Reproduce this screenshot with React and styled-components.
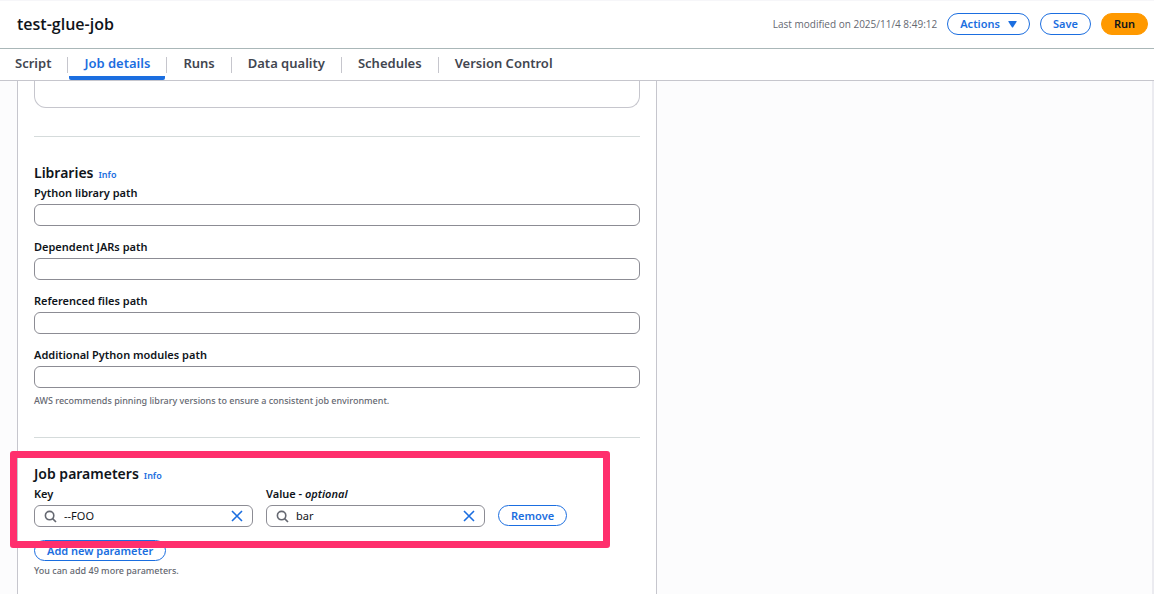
import React, { useState } from "react";
import styled, { createGlobalStyle } from "styled-components";

const GlobalStyle = createGlobalStyle`
  * {
    box-sizing: border-box;
  }

  body {
    margin: 0;
    background-color: #ffffff;
    color: #0f141a;
    font-family: "Noto Sans", "Open Sans", sans-serif;
    font-size: 11px;
    line-height: 16px;
  }

  button,
  input {
    font-family: inherit;
  }
`;

const Page = styled.div`
  display: flex;
  flex-direction: column;
  height: 100vh;
  overflow: hidden;
`;

const Header = styled.header`
  display: flex;
  align-items: center;
  justify-content: space-between;
  flex: none;
  padding: 12px 6px 13px 17px;
  border-top: 1px solid #f6f6f9;
  border-bottom: 1px solid #aab7b8;
`;

const JobName = styled.h1`
  margin: 0;
  font-family: "Open Sans", sans-serif;
  font-size: 16px;
  line-height: 22px;
  font-weight: 600;
`;

const HeaderActions = styled.div`
  display: flex;
  align-items: center;
  gap: 10px;
`;

const Muted = styled.p`
  margin: 0;
  color: #656871;
  font-family: "Open Sans", sans-serif;
  font-size: 10px;
  line-height: 16px;
`;

const Hint = styled(Muted)`
  margin-top: ${(props) => (props.$tight ? "2px" : "5px")};
  font-family: "Noto Sans", sans-serif;
  font-size: 9px;
  font-weight: 500;
`;

const Button = styled.button`
  display: inline-flex;
  align-items: center;
  justify-content: center;
  gap: 8px;
  height: ${(props) => (props.$small ? "21px" : "22px")};
  padding: 0 12px;
  border: 1px solid ${(props) => (props.$primary ? "#ff9900" : "#1b6ee0")};
  border-radius: 11px;
  background-color: ${(props) => (props.$primary ? "#ff9900" : "#ffffff")};
  color: ${(props) => (props.$primary ? "#0f141a" : "#1b6ee0")};
  font-size: 11px;
  line-height: 16px;
  font-weight: 600;
  white-space: nowrap;
  cursor: pointer;
`;

const TabList = styled.nav`
  display: flex;
  align-items: center;
  flex: none;
  border-bottom: 1px solid #c6c6cd;
`;

const Separator = styled.span`
  width: 1px;
  height: 16px;
  margin: 0 1px;
  background-color: #c6c6cd;
`;

const Tab = styled.button`
  height: 31px;
  padding: 0 15px;
  border: 0;
  border-bottom: 4px solid ${(props) => (props.$active ? "#1b6ee0" : "transparent")};
  border-radius: 2px;
  background: none;
  color: ${(props) => (props.$active ? "#1b6ee0" : "#424650")};
  font-size: 13px;
  line-height: 20px;
  font-weight: 600;
  cursor: pointer;
`;

const Main = styled.main`
  flex: 1;
  min-height: 0;
  overflow: hidden;
  padding: 0 17px;
  border-right: 2px solid #ebebf0;
  background-color: #fcfcfd;
`;

const Panel = styled.div`
  max-width: 640px;
  min-height: 100%;
  padding: 0 16px 16px;
  border: solid #c6c6cd;
  border-width: 0 1px;
  background-color: #ffffff;
`;

const DescriptionBox = styled.div`
  height: 27px;
  border: 1px solid #c6c6cd;
  border-top: 0;
  border-radius: 0 0 12px 12px;
`;

const Divider = styled.hr`
  height: 1px;
  margin: 28px 0 26px;
  border: 0;
  background-color: #d5dbdb;
`;

const Section = styled.section`
  position: relative;
`;

const SectionHeader = styled.div`
  display: flex;
  align-items: baseline;
  gap: 5px;
  margin-bottom: 1px;
`;

const SectionTitle = styled.h2`
  margin: 0;
  font-size: 14px;
  line-height: 20px;
  font-weight: 600;
`;

const InfoLink = styled.a`
  color: #1b6ee0;
  font-size: 9px;
  font-weight: 600;
  text-decoration: none;
`;

const Fields = styled.div`
  display: flex;
  flex-direction: column;
  gap: 12px;
`;

const Field = styled.div`
  display: flex;
  flex-direction: column;
`;

const Label = styled.label`
  margin-bottom: 2px;
  font-size: 11px;
  line-height: 18px;
  font-weight: 600;
`;

const InputBox = styled.div`
  display: flex;
  align-items: center;
  gap: 7px;
  height: 22px;
  padding: 0 9px;
  border: 1px solid #8c8c94;
  border-radius: 6px;
  background-color: #ffffff;
`;

const TextInput = styled.input`
  flex: 1;
  min-width: 0;
  padding: 0;
  border: 0;
  outline: 0;
  background: none;
  color: #0f141a;
  font-size: 11px;
  line-height: 16px;
`;

const ClearButton = styled.button`
  display: flex;
  padding: 0;
  border: 0;
  background: none;
  color: #1b6ee0;
  cursor: pointer;
`;

const ParameterRow = styled.div`
  display: grid;
  grid-template-columns: minmax(0, 219px) minmax(0, 219px) auto;
  justify-content: start;
  align-items: end;
  gap: 13px;
  margin-bottom: 13px;
`;

const RemoveCell = styled.div`
  display: flex;
  height: 22px;
`;

const Highlight = styled.div`
  position: absolute;
  inset: -13px 30px auto -24px;
  height: 97px;
  border: 7px solid #ff2f6d;
  border-radius: 3px;
  pointer-events: none;
`;

const libraryFields = [
  { id: "python-library", label: "Python library path" },
  { id: "dependent-jars", label: "Dependent JARs path" },
  { id: "referenced-files", label: "Referenced files path" },
  { id: "python-modules", label: "Additional Python modules path" },
];

const tabs = [
  "Script",
  "Job details",
  "Runs",
  "Data quality",
  "Schedules",
  "Version Control",
];

function SearchIcon() {
  return (
    <svg width="13" height="13" viewBox="0 0 13 13" fill="none" stroke="#656871" strokeWidth="1.6">
      <circle cx="5.6" cy="5.6" r="4.2" />
      <path d="M8.6 8.6L12 12" />
    </svg>
  );
}

function CloseIcon() {
  return (
    <svg width="12" height="12" viewBox="0 0 12 12" fill="none" stroke="currentColor" strokeWidth="1.6">
      <path d="M1 1L11 11M11 1L1 11" />
    </svg>
  );
}

function CaretIcon() {
  return (
    <svg width="9" height="7" viewBox="0 0 9 7" fill="currentColor">
      <path d="M0.8 0H8.2Q9 0 8.6 0.8L5.1 6.2Q4.5 7 3.9 6.2L0.4 0.8Q0 0 0.8 0Z" />
    </svg>
  );
}

function SearchField({ id, label, initial }) {
  const [value, setValue] = useState(initial);

  return (
    <Field>
      <Label htmlFor={id}>{label}</Label>
      <InputBox>
        <SearchIcon />
        <TextInput id={id} value={value} onChange={(e) => setValue(e.target.value)} />
        <ClearButton type="button" aria-label="Clear" onClick={() => setValue("")}>
          <CloseIcon />
        </ClearButton>
      </InputBox>
    </Field>
  );
}

function App() {
  const [activeTab, setActiveTab] = useState("Job details");

  return (
    <Page>
      <GlobalStyle />
      <Header>
        <JobName>test-glue-job</JobName>
        <HeaderActions>
          <Muted>Last modified on 2025/11/4 8:49:12</Muted>
          <Button type="button">
            Actions
            <CaretIcon />
          </Button>
          <Button type="button">Save</Button>
          <Button type="button" $primary>
            Run
          </Button>
        </HeaderActions>
      </Header>
      <TabList>
        {tabs.map((tab, index) => (
          <React.Fragment key={tab}>
            {index > 0 && <Separator />}
            <Tab type="button" $active={tab === activeTab} onClick={() => setActiveTab(tab)}>
              {tab}
            </Tab>
          </React.Fragment>
        ))}
      </TabList>
      <Main>
        <Panel>
          <DescriptionBox />
          <Divider />
          <Section>
            <SectionHeader>
              <SectionTitle>Libraries</SectionTitle>
              <InfoLink href="#libraries">Info</InfoLink>
            </SectionHeader>
            <Fields>
              {libraryFields.map((field) => (
                <Field key={field.id}>
                  <Label htmlFor={field.id}>{field.label}</Label>
                  <InputBox>
                    <TextInput id={field.id} />
                  </InputBox>
                </Field>
              ))}
            </Fields>
            <Hint>AWS recommends pinning library versions to ensure a consistent job environment.</Hint>
          </Section>
          <Divider />
          <Section>
            <SectionHeader>
              <SectionTitle>Job parameters</SectionTitle>
              <InfoLink href="#parameters">Info</InfoLink>
            </SectionHeader>
            <ParameterRow>
              <SearchField id="param-key" label="Key" initial="--FOO" />
              <SearchField
                id="param-value"
                label={
                  <>
                    Value - <em>optional</em>
                  </>
                }
                initial="bar"
              />
              <RemoveCell>
                <Button type="button" $small>
                  Remove
                </Button>
              </RemoveCell>
            </ParameterRow>
            <Button type="button" $small>
              Add new parameter
            </Button>
            <Hint $tight>You can add 49 more parameters.</Hint>
            <Highlight />
          </Section>
        </Panel>
      </Main>
    </Page>
  );
}

export default App;
